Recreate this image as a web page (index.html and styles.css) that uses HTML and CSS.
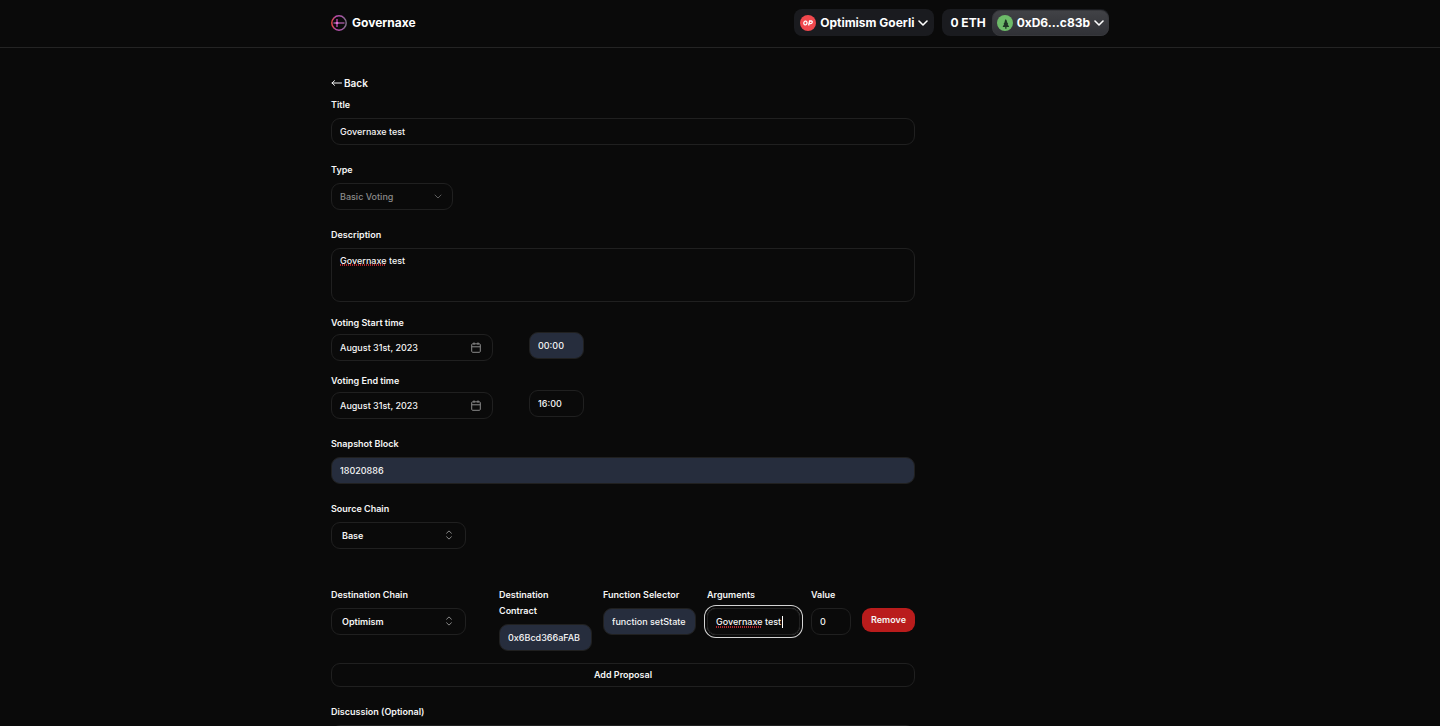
FILE: index.html
```html
<!DOCTYPE html>
<html lang="en">
<head>
<meta charset="utf-8">
<meta name="viewport" content="width=device-width, initial-scale=1">
<title>Governaxe</title>
<link rel="stylesheet" href="styles.css">
</head>
<body>
<header class="topbar">
  <div class="container topbar-inner">
    <a class="brand" href="#">
      <svg class="brand-logo" viewBox="0 0 16 16" fill="none" aria-hidden="true">
        <defs>
          <linearGradient id="ring" x1="0" y1="0" x2="1" y2="0">
            <stop offset="0" stop-color="#e0433f"/>
            <stop offset=".25" stop-color="#b84aa8"/>
            <stop offset=".7" stop-color="#a657a6"/>
            <stop offset="1" stop-color="#7d6f86"/>
          </linearGradient>
        </defs>
        <circle cx="8" cy="8" r="7.2" stroke="url(#ring)" stroke-width="1.5"/>
        <path d="M2.5 8H13.5" stroke="#b05fae" stroke-width="1.3"/>
        <path d="M6 4v8" stroke="#c94bb8" stroke-width="1.3"/>
        <path d="M4.8 8h2.4" stroke="#f07be0" stroke-width="1.6"/>
      </svg>
      <span>Governaxe</span>
    </a>
    <div class="wallet">
      <button class="chip chain" type="button">
        <svg class="avatar" viewBox="0 0 16 16" aria-hidden="true">
          <circle cx="8" cy="8" r="8" fill="#f0484d"/>
          <g fill="none" stroke="#fff" stroke-width="1.3">
            <ellipse cx="5.4" cy="8" rx="1.6" ry="1.9" transform="rotate(14 5.4 8)"/>
            <path d="M8.6 10.5l1-4.5h1.6q1.3 0 1 1.3t-1.7 1.4H9.2"/>
          </g>
        </svg>
        <span>Optimism Goerli</span>
        <svg class="caret" viewBox="0 0 10 6" fill="none" aria-hidden="true"><path d="M1 1l4 4 4-4" stroke="#fff" stroke-width="1.6" stroke-linecap="round" stroke-linejoin="round"/></svg>
      </button>
      <div class="account">
        <span class="balance">0 ETH</span>
        <button class="chip account-button" type="button">
          <svg class="avatar" viewBox="0 0 16 16" aria-hidden="true">
            <circle cx="8" cy="8" r="8" fill="#6dbb69"/>
            <path d="M8.8 4l1.4 2.6h-.5l1.5 2.5h-.6l1.6 2.8H9.5v1.9H8.2v-1.9H5.6l1.5-2.8h-.6L8 6.6h-.6z" fill="#1f3526"/>
          </svg>
          <span>0xD6...c83b</span>
          <svg class="caret" viewBox="0 0 10 6" fill="none" aria-hidden="true"><path d="M1 1l4 4 4-4" stroke="#fff" stroke-width="1.6" stroke-linecap="round" stroke-linejoin="round"/></svg>
        </button>
      </div>
    </div>
  </div>
</header>

<main class="page">
  <div class="container">
    <form class="proposal">
      <a class="back" href="#">
        <svg viewBox="0 0 11 8" fill="none" aria-hidden="true"><path d="M3.5 1.7L1 4l2.5 2.3M1 4h9.5" stroke="currentColor" stroke-linecap="round" stroke-linejoin="round"/></svg>
        <span>Back</span>
      </a>

      <div class="field">
        <label for="title">Title</label>
        <input class="control" id="title" type="text" value="Governaxe test">
      </div>

      <div class="field">
        <label for="type">Type</label>
        <div class="picker picker-type">
          <select class="control" id="type" disabled><option>Basic Voting</option></select>
          <svg viewBox="0 0 10 10" fill="none" aria-hidden="true"><path d="M2 4l3 3 3-3" stroke="currentColor" stroke-linecap="round" stroke-linejoin="round"/></svg>
        </div>
      </div>

      <div class="field field-description">
        <label for="description">Description</label>
        <div class="checked">
          <textarea class="control" id="description" spellcheck="false">Governaxe test</textarea>
          <span class="squiggle"></span>
        </div>
      </div>

      <div class="schedule">
        <div class="field field-tight">
          <label for="start-date">Voting Start time</label>
          <button class="control date" id="start-date" type="button">
            <span>August 31st, 2023</span>
            <svg viewBox="0 0 10 11" fill="none" stroke="currentColor" aria-hidden="true"><rect x=".7" y="1.8" width="8.6" height="8.5" rx="1"/><path d="M.7 4.8h8.6M3 .4v2.4M7 .4v2.4"/></svg>
          </button>
        </div>
        <input class="control filled time" type="text" value="00:00" aria-label="Start hour">
      </div>

      <div class="schedule schedule-end">
        <div class="field field-tight">
          <label for="end-date">Voting End time</label>
          <button class="control date" id="end-date" type="button">
            <span>August 31st, 2023</span>
            <svg viewBox="0 0 10 11" fill="none" stroke="currentColor" aria-hidden="true"><rect x=".7" y="1.8" width="8.6" height="8.5" rx="1"/><path d="M.7 4.8h8.6M3 .4v2.4M7 .4v2.4"/></svg>
          </button>
        </div>
        <input class="control time" type="text" value="16:00" aria-label="End hour">
      </div>

      <div class="field">
        <label for="block">Snapshot Block</label>
        <input class="control filled" id="block" type="text" value="18020886">
      </div>

      <div class="field field-source">
        <label for="source">Source Chain</label>
        <div class="picker picker-chain">
          <select class="control" id="source"><option>Base</option></select>
          <svg viewBox="0 0 10 10" fill="none" aria-hidden="true"><path d="M2.6 3.2L5 .9l2.4 2.3M2.6 6.8L5 9.1l2.4-2.3" stroke="currentColor" stroke-linecap="round" stroke-linejoin="round"/></svg>
        </div>
      </div>

      <div class="action-row">
        <div class="field">
          <label for="destination">Destination Chain</label>
          <div class="picker picker-chain">
            <select class="control" id="destination"><option>Optimism</option></select>
            <svg viewBox="0 0 10 10" fill="none" aria-hidden="true"><path d="M2.6 3.2L5 .9l2.4 2.3M2.6 6.8L5 9.1l2.4-2.3" stroke="currentColor" stroke-linecap="round" stroke-linejoin="round"/></svg>
          </div>
        </div>
        <div class="field">
          <label for="contract">Destination<br>Contract</label>
          <input class="control filled" id="contract" type="text" value="0x6Bcd366aFAB">
        </div>
        <div class="field">
          <label for="selector">Function Selector</label>
          <input class="control filled" id="selector" type="text" value="function setState">
        </div>
        <div class="field">
          <label for="arguments">Arguments</label>
          <div class="checked">
            <input class="control active" id="arguments" type="text" value="Governaxe test" spellcheck="false">
            <span class="squiggle"></span>
            <span class="text-cursor"></span>
          </div>
        </div>
        <div class="field">
          <label for="value">Value</label>
          <input class="control" id="value" type="text" value="0">
        </div>
        <button class="remove" type="button">Remove</button>
      </div>

      <button class="control add" type="button">Add Proposal</button>

      <div class="field">
        <label for="discussion">Discussion (Optional)</label>
        <input class="control" id="discussion" type="text">
      </div>
    </form>
  </div>
</main>
</body>
</html>
```
FILE: styles.css
```css
:root {
  --bg: #0a0a0a;
  --line: #202020;
  --fill: #262d3d;
  --text: #f5f5f5;
  --muted: #8a8a8a;
}

* {
  box-sizing: border-box;
}

body {
  display: flex;
  flex-direction: column;
  height: 100vh;
  margin: 0;
  overflow: hidden;
  background: var(--bg);
  color: var(--text);
  font: 500 9px/16px Inter, "Liberation Sans", sans-serif;
}

button,
input,
select,
textarea {
  margin: 0;
  color: inherit;
  font: inherit;
}

a {
  color: inherit;
  text-decoration: none;
}

svg {
  display: block;
  flex: none;
}

.container {
  width: 100%;
  max-width: 778px;
  margin: 0 auto;
}

.topbar {
  flex: none;
  border-bottom: 1px solid #242424;
}

.topbar-inner {
  display: flex;
  align-items: center;
  justify-content: space-between;
  padding: 9px 0 11px;
}

.brand {
  display: flex;
  align-items: center;
  gap: 5px;
  color: #fff;
  font-size: 12px;
  font-weight: 700;
}

.brand-logo {
  width: 16px;
  height: 16px;
}

.wallet {
  display: flex;
  gap: 8px;
}

.chip {
  display: flex;
  align-items: center;
  gap: 4px;
  height: 27px;
  padding: 0 6px;
  border: 0;
  border-radius: 8px;
  background: #1a1b1f;
  color: #fff;
  font-size: 12px;
  font-weight: 700;
}

.avatar {
  width: 16px;
  height: 16px;
}

.caret {
  width: 10px;
  height: 6px;
}

.account {
  display: flex;
  align-items: center;
  border-radius: 8px;
  background: #1a1b1f;
  color: #fff;
  font-size: 12px;
  font-weight: 700;
}

.balance {
  padding: 0 6px 0 8px;
}

.account-button {
  height: 26px;
  padding: 0 4px;
  border: 1px solid #36373b;
  background: linear-gradient(#414246, #303136);
}

.page {
  flex: 1;
  min-height: 0;
  overflow-y: auto;
  scrollbar-width: none;
}

.proposal {
  display: flex;
  flex-direction: column;
  gap: 17px;
  max-width: 584px;
  padding: 27px 0 48px;
}

.back {
  display: flex;
  align-items: center;
  gap: 2px;
  margin-bottom: -11px;
  font-size: 10px;
  font-weight: 600;
}

.back svg {
  width: 11px;
  height: 8px;
}

.field {
  display: flex;
  flex-direction: column;
  gap: 5px;
  min-width: 0;
}

.field-tight {
  gap: 3px;
}

.field label {
  font-weight: 600;
}

.control {
  display: block;
  width: 100%;
  height: 27px;
  padding: 0 8px;
  border: 1px solid var(--line);
  border-radius: 9px;
  outline: 0;
  background: transparent;
}

.filled {
  background: var(--fill);
}

textarea.control {
  height: 54px;
  padding: 4px 8px;
  resize: none;
}

.field-description {
  margin-bottom: -4px;
}

.picker {
  position: relative;
}

.picker select {
  appearance: none;
  opacity: 1;
}

.picker svg {
  position: absolute;
  top: 8px;
  right: 12px;
  width: 10px;
  height: 10px;
  color: var(--muted);
  pointer-events: none;
}

.picker-type {
  width: 122px;
  color: var(--muted);
}

.picker-type svg {
  right: 10px;
  color: #5c5c5c;
}

.picker-chain {
  width: 135px;
}

.picker-chain select {
  padding: 0 10px;
  font-weight: 600;
}

.schedule {
  display: flex;
  align-items: flex-start;
  gap: 36px;
}

.schedule-end {
  margin-top: -5px;
}

.schedule .field {
  width: 162px;
}

.schedule .time {
  width: 55px;
  margin-top: 17px;
}

.date {
  display: flex;
  align-items: center;
  justify-content: space-between;
  padding: 0 11px 0 8px;
}

.date svg {
  width: 10px;
  height: 11px;
  color: var(--muted);
}

.field-source {
  margin-bottom: 21px;
}

.action-row {
  display: grid;
  grid-template-columns: 1fr 93px 93px 93px 40px 53px;
  align-items: start;
  gap: 11px;
  margin-bottom: -5px;
}

.checked {
  position: relative;
}

.squiggle {
  position: absolute;
  top: 16px;
  left: 9px;
  width: 46px;
  height: 2px;
  background: repeating-linear-gradient(90deg, #b3262e 0 1px, transparent 1px 2px);
}

.action-row .squiggle {
  top: 18px;
}

.active {
  box-shadow: 0 0 0 2px var(--bg), 0 0 0 3px #d4d4d4;
}

.text-cursor {
  position: absolute;
  top: 8px;
  left: 75px;
  width: 1px;
  height: 12px;
  background: #fff;
}

.remove {
  height: 24px;
  margin-top: 21px;
  padding: 0;
  border: 0;
  border-radius: 9px;
  background: #b91c1c;
  font-weight: 600;
}

.add {
  height: 24px;
  font-weight: 600;
}
```
